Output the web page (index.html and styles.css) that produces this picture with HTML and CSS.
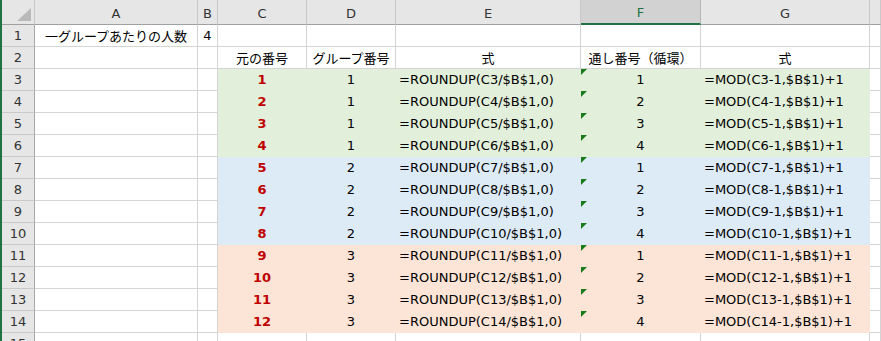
FILE: index.html
```html
<!DOCTYPE html>
<html lang="ja">
<head>
<meta charset="utf-8">
<link rel="stylesheet" href="styles.css">
</head>
<body>
<div class="frame">
<div class="sheet">
  <div class="c h corner"><svg width="32" height="24" viewBox="0 0 32 24"><polygon points="29,8 29,21 15,21" fill="#b9b9b9"/></svg></div>
  <div class="c h">A</div><div class="c h">B</div><div class="c h">C</div><div class="c h">D</div><div class="c h">E</div><div class="c h sel">F</div><div class="c h">G</div><div class="c h"></div>

  <div class="c r">1</div><div class="c jp">一グループあたりの人数</div><div class="c">4</div><div class="c"></div><div class="c"></div><div class="c"></div><div class="c"></div><div class="c"></div><div class="c"></div>

  <div class="c r">2</div><div class="c"></div><div class="c"></div><div class="c jp">元の番号</div><div class="c jp">グループ番号</div><div class="c jp">式</div><div class="c jp">通し番号（循環）</div><div class="c jp">式</div><div class="c"></div>

  <div class="c r">3</div><div class="c"></div><div class="c"></div><div class="c g red">1</div><div class="c g">1</div><div class="c g l">=ROUNDUP(C3/$B$1,0)</div><div class="c g tri">1</div><div class="c g l">=MOD(C3-1,$B$1)+1</div><div class="c"></div>
  <div class="c r">4</div><div class="c"></div><div class="c"></div><div class="c g red">2</div><div class="c g">1</div><div class="c g l">=ROUNDUP(C4/$B$1,0)</div><div class="c g tri">2</div><div class="c g l">=MOD(C4-1,$B$1)+1</div><div class="c"></div>
  <div class="c r">5</div><div class="c"></div><div class="c"></div><div class="c g red">3</div><div class="c g">1</div><div class="c g l">=ROUNDUP(C5/$B$1,0)</div><div class="c g tri">3</div><div class="c g l">=MOD(C5-1,$B$1)+1</div><div class="c"></div>
  <div class="c r">6</div><div class="c"></div><div class="c"></div><div class="c g red">4</div><div class="c g">1</div><div class="c g l">=ROUNDUP(C6/$B$1,0)</div><div class="c g tri">4</div><div class="c g l">=MOD(C6-1,$B$1)+1</div><div class="c"></div>

  <div class="c r">7</div><div class="c"></div><div class="c"></div><div class="c b red">5</div><div class="c b">2</div><div class="c b l">=ROUNDUP(C7/$B$1,0)</div><div class="c b tri">1</div><div class="c b l">=MOD(C7-1,$B$1)+1</div><div class="c"></div>
  <div class="c r">8</div><div class="c"></div><div class="c"></div><div class="c b red">6</div><div class="c b">2</div><div class="c b l">=ROUNDUP(C8/$B$1,0)</div><div class="c b tri">2</div><div class="c b l">=MOD(C8-1,$B$1)+1</div><div class="c"></div>
  <div class="c r">9</div><div class="c"></div><div class="c"></div><div class="c b red">7</div><div class="c b">2</div><div class="c b l">=ROUNDUP(C9/$B$1,0)</div><div class="c b tri">3</div><div class="c b l">=MOD(C9-1,$B$1)+1</div><div class="c"></div>
  <div class="c r">10</div><div class="c"></div><div class="c"></div><div class="c b red">8</div><div class="c b">2</div><div class="c b l">=ROUNDUP(C10/$B$1,0)</div><div class="c b tri">4</div><div class="c b l">=MOD(C10-1,$B$1)+1</div><div class="c"></div>

  <div class="c r">11</div><div class="c"></div><div class="c"></div><div class="c o red">9</div><div class="c o">3</div><div class="c o l">=ROUNDUP(C11/$B$1,0)</div><div class="c o tri">1</div><div class="c o l">=MOD(C11-1,$B$1)+1</div><div class="c"></div>
  <div class="c r">12</div><div class="c"></div><div class="c"></div><div class="c o red">10</div><div class="c o">3</div><div class="c o l">=ROUNDUP(C12/$B$1,0)</div><div class="c o tri">2</div><div class="c o l">=MOD(C12-1,$B$1)+1</div><div class="c"></div>
  <div class="c r">13</div><div class="c"></div><div class="c"></div><div class="c o red">11</div><div class="c o">3</div><div class="c o l">=ROUNDUP(C13/$B$1,0)</div><div class="c o tri">3</div><div class="c o l">=MOD(C13-1,$B$1)+1</div><div class="c"></div>
  <div class="c r">14</div><div class="c"></div><div class="c"></div><div class="c o red">12</div><div class="c o">3</div><div class="c o l">=ROUNDUP(C14/$B$1,0)</div><div class="c o tri">4</div><div class="c o l">=MOD(C14-1,$B$1)+1</div><div class="c"></div>

  <div class="c r">15</div><div class="c"></div><div class="c"></div><div class="c"></div><div class="c"></div><div class="c"></div><div class="c"></div><div class="c"></div><div class="c"></div>
</div>
</div>
</body>
</html>
```
FILE: styles.css
```css
html, body {
  margin: 0;
  padding: 0;
  background: #ffffff;
  overflow: hidden;
  width: 881px;
  height: 341px;
}
.frame {
  border-left: 2px solid #217346;
  height: 341px;
  overflow: hidden;
}
.sheet {
  display: grid;
  grid-template-columns: 33px 163px 20px 89px 89px 185px 120px 169px 1fr;
  grid-template-rows: 25px;
  grid-auto-rows: 22px;
  font-family: "DejaVu Sans", "Noto Sans CJK JP", sans-serif;
  font-size: 13px;
  color: #000;
}
.c {
  box-sizing: border-box;
  border-right: 1px solid #d4d4d4;
  border-bottom: 1px solid #d4d4d4;
  display: flex;
  align-items: center;
  justify-content: center;
  white-space: nowrap;
  overflow: hidden;
  line-height: 21px;
}
.jp {
  font-family: "Noto Sans CJK JP", sans-serif;
}
.h {
  background: #e6e6e6;
  border-right-color: #c9c9c9;
  border-bottom-color: #a0a0a0;
  color: #333;
  padding-top: 2px;
}
.corner {
  padding: 0;
  align-items: stretch;
  justify-content: stretch;
}
.corner svg { display: block; }
.sel {
  background: #d2d2d2;
  color: #217346;
  border-bottom: 2px solid #217346;
  border-right-color: #b5b5b5;
}
.r {
  background: #e6e6e6;
  border-right-color: #a8a8a8;
  border-bottom-color: #c9c9c9;
  color: #333;
}
.g { background: #e2efda; border-color: transparent; }
.b { background: #ddebf7; border-color: transparent; }
.o { background: #fce4d6; border-color: transparent; }
.l {
  justify-content: flex-start;
  padding-left: 3px;
}
.red {
  color: #c00000;
  font-weight: bold;
}
.tri { position: relative; }
.tri::before {
  content: "";
  position: absolute;
  top: 0;
  left: 0;
  width: 0;
  height: 0;
  border-top: 6px solid #187a18;
  border-right: 6px solid transparent;
}
```
